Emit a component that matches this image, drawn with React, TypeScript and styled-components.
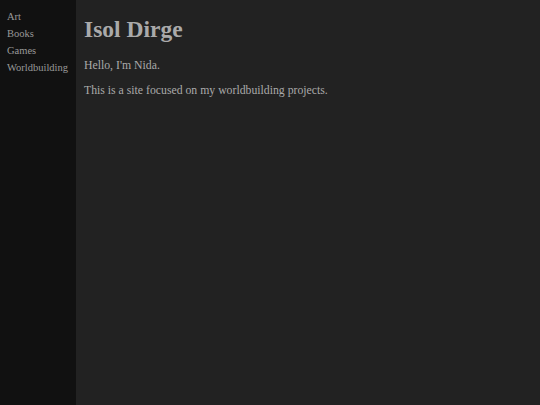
import styled, { createGlobalStyle } from 'styled-components';

const GlobalStyle = createGlobalStyle`
  html, body {
    margin: 0;
    padding: 0;
    height: 100%;
    background-color: #222;
  }
  #root {
    height: 100%;
  }
`;

const Layout = styled.div`
  display: flex;
  min-height: 100vh;
  font-family: "Liberation Serif", "Times New Roman", serif;
  color: #aaa;
`;

const Sidebar = styled.nav`
  width: 76px;
  flex-shrink: 0;
  box-sizing: border-box;
  padding: 8px 7px;
  background-color: #111;
`;

const NavLink = styled.a`
  display: block;
  font-size: 10.5px;
  line-height: 17px;
  color: #999;
  text-decoration: none;
  white-space: nowrap;
`;

const Main = styled.main`
  flex: 1;
  padding: 0 8px;
  background-color: #222;
`;

const Title = styled.h1`
  margin: 16px 0;
  font-size: 23.5px;
  font-weight: bold;
  color: #aaa;
`;

const Text = styled.p`
  margin: 12px 0;
  font-size: 11.75px;
`;

const links = ['Art', 'Books', 'Games', 'Worldbuilding'];

export default function App() {
  return (
    <>
      <GlobalStyle />
      <Layout>
        <Sidebar>
          {links.map((l) => (
            <NavLink key={l} href="#">{l}</NavLink>
          ))}
        </Sidebar>
        <Main>
          <Title>Isol Dirge</Title>
          <Text>Hello, I'm Nida.</Text>
          <Text>This is a site focused on my worldbuilding projects.</Text>
        </Main>
      </Layout>
    </>
  );
}
